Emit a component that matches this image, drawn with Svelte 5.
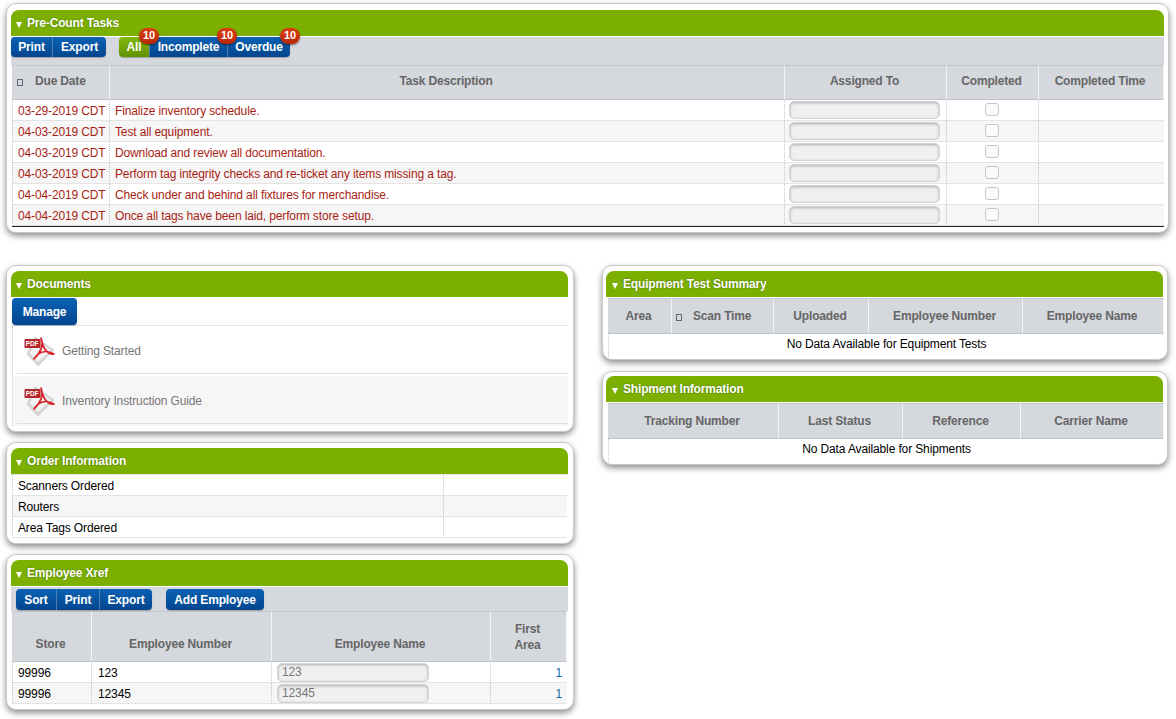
<script>
  const tasks = [
    ['03-29-2019 CDT', 'Finalize inventory schedule.'],
    ['04-03-2019 CDT', 'Test all equipment.'],
    ['04-03-2019 CDT', 'Download and review all documentation.'],
    ['04-03-2019 CDT', 'Perform tag integrity checks and re-ticket any items missing a tag.'],
    ['04-04-2019 CDT', 'Check under and behind all fixtures for merchandise.'],
    ['04-04-2019 CDT', 'Once all tags have been laid, perform store setup.']
  ];
  const docs = ['Getting Started', 'Inventory Instruction Guide'];
  const orders = ['Scanners Ordered', 'Routers', 'Area Tags Ordered'];
  const employees = [['99996', '123'], ['99996', '12345']];
</script>

<div class="page">
  <section class="panel first">
    <h2 class="title"><i class="tri"></i>Pre-Count Tasks</h2>
    <div class="toolbar tall">
      <div class="group"><button class="w42">Print</button><button class="w53">Export</button></div>
      <div class="group tabs">
        <button class="on wa">All<b class="badge">10</b></button>
        <button class="wi">Incomplete<b class="badge">10</b></button>
        <button class="wo">Overdue<b class="badge">10</b></button>
      </div>
    </div>
    <table class="t-tasks">
      <colgroup><col style="width:98px"><col><col style="width:162px"><col style="width:92px"><col style="width:125px"></colgroup>
      <thead><tr class="up2"><th class="h35 lead"><i class="sort"></i>Due Date</th><th>Task Description</th><th>Assigned To</th><th>Completed</th><th>Completed Time</th></tr></thead>
      <tbody>
        {#each tasks as t}
          <tr class="red">
            <td>{t[0]}</td><td>{t[1]}</td>
            <td class="ctl"><span class="field"></span></td>
            <td class="mid"><span class="check"></span></td>
            <td></td>
          </tr>
        {/each}
      </tbody>
    </table>
  </section>

  <div class="cols">
    <div class="col left">
      <section class="panel">
        <h2 class="title"><i class="tri"></i>Documents</h2>
        <div class="toolbar plain"><button class="manage">Manage</button></div>
        <div class="docs">
          {#each docs as d}
            <div class="doc">
              <div class="doc-in">
                <svg width="32" height="32" viewBox="0 0 32 32" aria-hidden="true">
                  <path d="M11 2 L30 15 L14 31 L3 19 Z" fill="#d6d6d6" stroke="#c4c4c4" stroke-width=".6"/>
                  <path d="M12 4 L27 15 L14 27 L6 18 Z" fill="#f3f3f3"/>
                  <path d="M17 3 C20 10 17 17 10 24 C14 17 22 14 30 19 C24 20 19 14 17 3 Z" fill="none" stroke="#d8242c" stroke-width="1.7" stroke-linejoin="round"/>
                  <rect x="0.5" y="4" width="16" height="9" rx="1" fill="#b3262b"/>
                  <text x="1.7" y="11.3" class="pdf">PDF</text>
                </svg>
                <span>{d}</span>
              </div>
            </div>
          {/each}
        </div>
      </section>

      <section class="panel">
        <h2 class="title"><i class="tri"></i>Order Information</h2>
        <table class="t-order">
          <colgroup><col style="width:432px"><col></colgroup>
          <tbody>
            {#each orders as o}<tr><td>{o}</td><td></td></tr>{/each}
          </tbody>
        </table>
      </section>

      <section class="panel">
        <h2 class="title"><i class="tri"></i>Employee Xref</h2>
        <div class="toolbar short">
          <div class="group"><button class="w41">Sort</button><button class="w43">Print</button><button class="w52">Export</button></div>
          <div class="group add"><button class="w98">Add Employee</button></div>
        </div>
        <table class="t-emp">
          <colgroup><col style="width:80px"><col style="width:180px"><col style="width:219px"><col></colgroup>
          <thead><tr><th class="h50 bot">Store</th><th class="bot">Employee Number</th><th class="bot">Employee Name</th><th class="two">First<br>Area</th></tr></thead>
          <tbody>
            {#each employees as e}
              <tr><td>{e[0]}</td><td class="second">{e[1]}</td><td class="ctl"><span class="field name">{e[1]}</span></td><td class="num">1</td></tr>
            {/each}
          </tbody>
        </table>
      </section>
    </div>

    <div class="col right">
      <section class="panel tight">
        <h2 class="title"><i class="tri"></i>Equipment Test Summary</h2>
        <table class="t-equip">
          <colgroup><col style="width:64px"><col style="width:102px"><col style="width:95px"><col style="width:154px"><col></colgroup>
          <thead><tr class="up1"><th class="h36">Area</th><th class="lead"><i class="sort"></i>Scan Time</th><th>Uploaded</th><th>Employee Number</th><th>Employee Name</th></tr></thead>
          <tbody><tr><td colspan="5" class="none">No Data Available for Equipment Tests</td></tr></tbody>
        </table>
      </section>
      <section class="panel tight thin">
        <h2 class="title"><i class="tri"></i>Shipment Information</h2>
        <table class="t-equip">
          <colgroup><col style="width:171px"><col style="width:124px"><col style="width:118px"><col></colgroup>
          <thead><tr class="up1"><th class="h36">Tracking Number</th><th>Last Status</th><th>Reference</th><th>Carrier Name</th></tr></thead>
          <tbody><tr><td colspan="4" class="none">No Data Available for Shipments</td></tr></tbody>
        </table>
      </section>
    </div>
  </div>
</div>

<style>
  :global(body) { margin: 0; background: #fff; }
  .page {
    width: 1176px;
    height: 719px;
    overflow: hidden;
    box-sizing: border-box;
    padding: 3px 7px 0 6px;
    font: 12px "Liberation Sans", Arial, sans-serif;
    letter-spacing: -.13px;
    color: #000;
  }
  .panel {
    box-sizing: border-box;
    background: #fff;
    border: 1px solid #c8c8c8;
    border-radius: 10px;
    padding: 5px 4px;
    box-shadow: 0 3px 6px rgba(0, 0, 0, .45);
  }
  .first { padding-top: 6px; }
  .thin { padding-top: 4px; }
  .tight { padding-bottom: 2px; }
  .left .panel { padding-right: 5px; }
  .title {
    margin: 0;
    height: 26px;
    line-height: 26px;
    padding-left: 5px;
    background: #7cb000;
    color: #fff;
    font-size: 12px;
    font-weight: bold;
    letter-spacing: -.17px;
    border-radius: 8px 8px 0 0;
    text-shadow: 0 0 2px rgba(40, 70, 0, .6);
    display: flex;
    align-items: center;
  }
  .right .title { margin-left: -1px; padding-left: 6px; }
  .tri {
    width: 0;
    height: 0;
    margin: 3px 5px 0 0;
    border: 3.5px solid transparent;
    border-top: 6px solid #fff;
    border-bottom: 0;
  }
  .toolbar {
    margin-top: 1px;
    background: #d5d8dd;
    display: flex;
  }
  .toolbar.tall { height: 28px; }
  .toolbar.short { height: 24px; padding: 2px 0 0 5px; box-sizing: border-box; }
  .toolbar.plain { background: #fff; height: 28px; border-bottom: 1px solid #e3e3e3; box-sizing: border-box; }
  .group { display: flex; height: 20px; }
  .short .group { height: 21px; }
  .tabs { margin-left: 13px; }
  .add { margin-left: 14px; }
  button {
    position: relative;
    box-sizing: border-box;
    border: 0;
    border-right: 1px solid #4f83b8;
    padding: 0;
    margin: 0;
    color: #fff;
    font: bold 12px "Liberation Sans", Arial, sans-serif;
    letter-spacing: -.17px;
    background: linear-gradient(#0b62b4, #03458e);
    box-shadow: 0 1px 1px rgba(0, 0, 0, .25);
  }
  button:first-child { border-radius: 4px 0 0 4px; }
  button:last-child { border-radius: 0 4px 4px 0; border-right: 0; }
  button:first-child:last-child { border-radius: 4px; }
  .w42 { width: 42px; }
  .w53 { width: 53px; }
  .w41 { width: 41px; }
  .w43 { width: 43px; }
  .w52 { width: 52px; }
  .w98 { width: 98px; }
  button.manage { width: 65px; height: 27px; margin-left: 1px; border-radius: 4px; border: 0; }
  .on { background: linear-gradient(#85b80c, #5f9200); }
  .wa { width: 31px; }
  .wi { width: 78px; }
  .wo { width: 62px; }
  .badge {
    position: absolute;
    top: -9px;
    right: -10px;
    z-index: 1;
    width: 20px;
    height: 16px;
    line-height: 15px;
    border-radius: 8px;
    background: linear-gradient(#dc3c10, #b82808);
    color: #fff;
    font-size: 11px;
    letter-spacing: 0;
    box-shadow: 0 1px 2px rgba(0, 0, 0, .55);
    text-align: center;
  }
  table {
    border-collapse: separate;
    border-spacing: 0;
    table-layout: fixed;
    font-size: 12px;
  }
  th {
    background: #d5d8dd;
    color: #666;
    font-weight: bold;
    letter-spacing: -.17px;
    border: 1px solid #f2f3f5;
    border-top-color: #c4c7cc;
    border-bottom-color: #c0c3c8;
    border-left: 0;
    padding: 0 2px 0 0;
    box-sizing: border-box;
  }
  .up2 th { padding-bottom: 3px; }
  .up1 th { padding-bottom: 1px; }
  td {
    height: 21px;
    box-sizing: border-box;
    padding: 1px 5px 0;
    border-right: 1px dotted #c4c4c4;
    border-bottom: 1px solid #e4e4e4;
    white-space: nowrap;
  }
  td:first-child { border-left: 1px dotted #c4c4c4; }
  td:last-child { border-right: 0; }
  tbody tr:nth-child(even) td { background: #f6f6f6; }
  .t-tasks { width: 1152px; margin-left: 1px; border-bottom: 1px solid #222; }
  .h35 { height: 35px; }
  .h36 { height: 36px; }
  .h50 { height: 51px; }
  .bot { vertical-align: bottom; padding-bottom: 10px; }
  .two { line-height: 16px; }
  th.lead { text-align: left; padding-left: 5px; }
  .up1 th.lead { padding-left: 4px; }
  .sort {
    display: inline-block;
    box-sizing: border-box;
    width: 6px;
    height: 7px;
    border: 1px solid #667;
    margin-right: 12px;
    vertical-align: -1px;
  }
  .up1 .sort { margin-right: 11px; }
  .red td { color: #a81d14; }
  td.ctl { padding: 0 0 0 4px; }
  .field {
    box-sizing: border-box;
    display: block;
    width: 151px;
    height: 18px;
    border-radius: 5px;
    border: 1px solid #d4d4d4;
    background: #f0f0f0;
    box-shadow: inset 0 1px 3px rgba(0, 0, 0, .28);
  }
  .name {
    color: #777;
    line-height: 17px;
    padding-left: 4px;
  }
  td.mid { text-align: center; padding: 0 2px 0 0; }
  .check {
    display: inline-block;
    box-sizing: border-box;
    width: 14px;
    height: 13px;
    vertical-align: -1px;
    border: 1px solid #c6c6c6;
    border-radius: 3px;
    background: #fbfbfb;
  }
  .cols {
    display: grid;
    grid-template-columns: 568px 566px;
    column-gap: 28px;
    margin-top: 32px;
  }
  .col { display: flex; flex-direction: column; row-gap: 10px; }
  .right { row-gap: 11px; }
  .docs { margin-left: 1px; border-left: 1px dotted #c4c4c4; }
  .doc {
    height: 50px;
    color: #777;
  }
  .doc:nth-child(even) { background: #f6f6f6; }
  .doc-in {
    box-sizing: border-box;
    height: 48px;
    margin-left: 4px;
    padding: 2px 0 0 7px;
    display: flex;
    align-items: center;
    column-gap: 6px;
    border-bottom: 1px solid #e0e0e0;
  }
  .pdf { font: bold 6.3px "Liberation Sans", Arial, sans-serif; letter-spacing: 0; fill: #fff; }
  .t-order { width: 555px; margin-left: 1px; border-top: 1px solid #e4e4e4; }
  .t-emp { width: 555px; margin-left: 1px; }
  td.second { padding-left: 6px; }
  .t-emp td.ctl { padding-left: 5px; }
  .t-emp .field { width: 152px; height: 19px; }
  .num { text-align: right; color: #0b6aa8; }
  .t-equip { width: 556px; margin: 1px 0 0 1px; }
  td.none { text-align: center; height: 23px; padding: 0 0 3px; border-bottom: 0; border-left: 1px dotted #c4c4c4; }
</style>
